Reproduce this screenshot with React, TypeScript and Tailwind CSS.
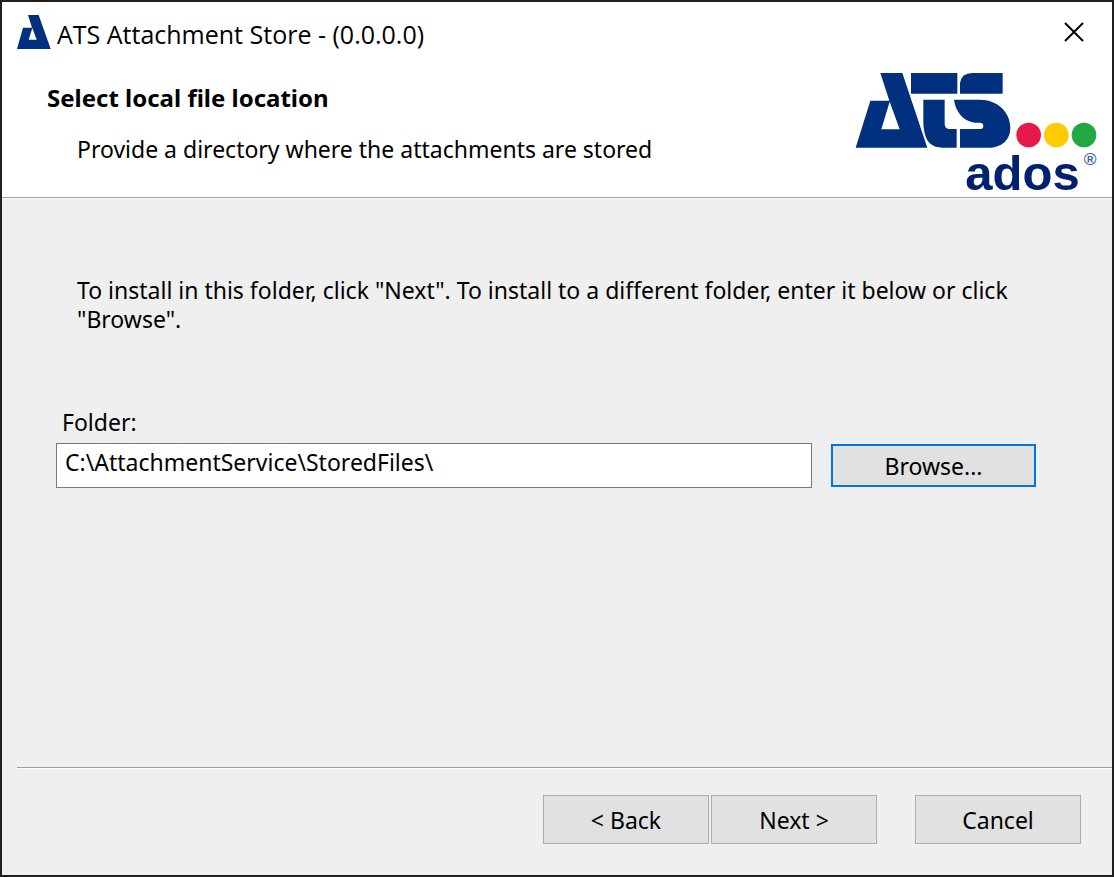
import React from 'react';

interface DialogButtonProps {
  children: React.ReactNode;
  className?: string;
}

function DialogButton({ children, className = '' }: DialogButtonProps) {
  return (
    <button
      type="button"
      className={`h-[49px] w-[166px] border border-[#adadad] bg-[#e1e1e1] pt-[2px] text-center ${className}`}
    >
      {children}
    </button>
  );
}

function AppIcon() {
  return (
    <svg className="h-[35px] w-[34px]" viewBox="0 0 102 105" fill="#00307e" aria-hidden="true">
      <path
        fillRule="evenodd"
        d="M33 0H65L101 102H0L18 38H45ZM46 39L35 74H59Z"
      />
    </svg>
  );
}

function Logo() {
  return (
    <svg className="h-[122px] w-[243px] overflow-visible" viewBox="27 30 729 366" role="img" aria-label="ATS ados">
      <g fill="#00307e">
        <path fillRule="evenodd" d="M106 39H172L247 263H32L76 122H133ZM134 125L109 208H164Z" />
        <path d="M198 39H337V101H198Z" />
        <path d="M235 119H299V191Q299 207 315 207H335V263H291Q249 263 239 220Q235 204 235 188Z" />
        <path d="M473 39V101H345V70Q349 39 382 39Z" />
        <path d="M327 119H405C458 119 496 157 496 203C496 240 470 263 430 263H345V207H405Q415 207 415 197Q415 188 403 188H390C352 184 331 151 327 119Z" />
      </g>
      <circle cx="551" cy="225" r="37" fill="#e61948" />
      <circle cx="634" cy="225" r="37" fill="#ffcb00" />
      <circle cx="717" cy="225" r="37" fill="#22a843" />
      <text
        x="361"
        y="390"
        fill="#00216f"
        fontSize="147"
        className="font-['Liberation_Sans',sans-serif] font-bold"
      >
        ados
      </text>
      <text
        x="716"
        y="314"
        fill="#46659d"
        fontSize="52"
        className="font-['Liberation_Sans',sans-serif] font-bold"
      >
        ®
      </text>
    </svg>
  );
}

export default function App() {
  return (
    <main className="flex min-h-screen flex-col border-2 border-[#202022] bg-[#efefef] font-['Noto_Sans',sans-serif] text-[23px] leading-[29px] text-black">
      <div className="bg-white">
        <header className="flex h-[60px] items-center pl-[15px] pr-6">
          <AppIcon />
          <h1 className="ml-1.5 pt-1 font-['Open_Sans',sans-serif] text-[25px]">
            ATS Attachment Store - (0.0.0.0)
          </h1>
          <button type="button" aria-label="Close" className="ml-auto p-1">
            <svg className="h-5 w-5" viewBox="0 0 20 20" stroke="#000" strokeWidth="2" aria-hidden="true">
              <path d="M1 1L19 19M19 1L1 19" />
            </svg>
          </button>
        </header>
        <div className="flex h-[135px] justify-between pl-[45px] pr-[15px]">
          <div className="pt-[21px]">
            <h2 className="text-2xl leading-[29px] font-bold">Select local file location</h2>
            <p className="mt-[23px] pl-[30px]">
              Provide a directory where the attachments are stored
            </p>
          </div>
          <div className="pt-2">
            <Logo />
          </div>
        </div>
      </div>

      <section className="flex-1 border-t border-[#a0a0a0]">
        <div className="border-t border-white pt-[77px]">
          <p className="pl-[75px] pr-20">
            To install in this folder, click "Next". To install to a different folder, enter it below or click
            "Browse".
          </p>
          <div className="mt-[74px] pl-[54px] pr-[76px]">
            <label htmlFor="folder" className="block pl-[6px]">
              Folder:
            </label>
            <div className="mt-[6px] flex items-center gap-[19px]">
              <input
                id="folder"
                type="text"
                defaultValue="C:\AttachmentService\StoredFiles\"
                className="h-[45px] min-w-0 flex-1 border border-[#7a7a7a] bg-white px-2 pb-2 outline-none"
              />
              <button
                type="button"
                className="h-[43px] w-[205px] border-2 border-[#0078d7] bg-[#e1e1e1] pt-[2px] text-center"
              >
                Browse...
              </button>
            </div>
          </div>
        </div>
      </section>

      <footer className="ml-[15px] border-t border-[#a0a0a0]">
        <div className="flex justify-end border-t border-white pb-[31px] pr-[31px] pt-[26px]">
          <DialogButton>&lt; Back</DialogButton>
          <DialogButton className="ml-[2px]">Next &gt;</DialogButton>
          <DialogButton className="ml-[38px]">Cancel</DialogButton>
        </div>
      </footer>
    </main>
  );
}
